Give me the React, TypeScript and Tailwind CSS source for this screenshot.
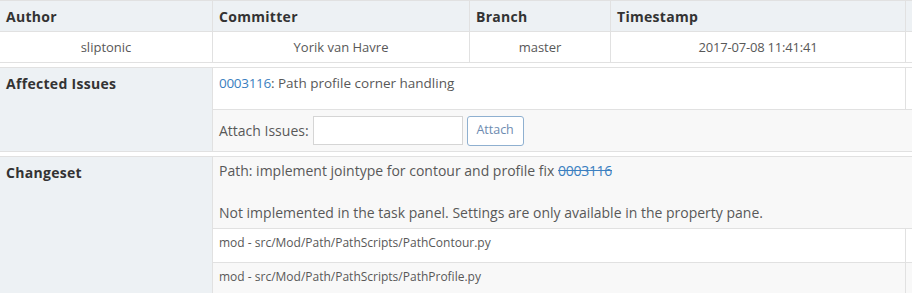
export default function App() {
  const font = { fontFamily: '"Open Sans", "Noto Sans", sans-serif' };
  return (
    <div className="w-[912px] h-[293px] overflow-hidden bg-white text-[13px] text-[#585858]" style={font}>
      {/* Table 1 */}
      <div className="w-[1000px] border-t border-b border-[#e1e1e1]">
        <div className="flex h-[31px] bg-[#edf1f4] border-b border-[#e1e1e1] font-bold text-[14px] tracking-[0.3px] text-[#333] items-center">
          <div className="w-[213px] h-full flex items-center px-[6px] border-r border-[#e1e1e1]">Author</div>
          <div className="w-[257px] h-full flex items-center px-[6px] border-r border-[#e1e1e1]">Committer</div>
          <div className="w-[141px] h-full flex items-center px-[6px] border-r border-[#e1e1e1]">Branch</div>
          <div className="w-[295px] h-full flex items-center px-[6px] border-r border-[#e1e1e1]">Timestamp</div>
          <div className="flex-1" />
        </div>
        <div className="flex h-[30px] items-center">
          <div className="w-[213px] h-full flex items-center justify-center pt-[2px] border-r border-[#e1e1e1]">sliptonic</div>
          <div className="w-[257px] h-full flex items-center justify-center pt-[2px] border-r border-[#e1e1e1]">Yorik van Havre</div>
          <div className="w-[141px] h-full flex items-center justify-center pt-[2px] border-r border-[#e1e1e1]">master</div>
          <div className="w-[295px] h-full flex items-center justify-center pt-[2px] border-r border-[#e1e1e1] tracking-[-0.2px]">2017-07-08 11:41:41</div>
          <div className="flex-1" />
        </div>
      </div>

      {/* Table 2 */}
      <div className="mt-[4px] w-[1000px] flex border-t border-b border-[#e1e1e1]">
        <div className="w-[213px] bg-[#edf1f4] border-r border-[#e1e1e1] px-[6px] pt-[5px] font-bold text-[14px] tracking-[0.3px] text-[#333]">Affected Issues</div>
        <div className="flex-1 flex flex-col">
          <div className="flex h-[42px] border-b border-[#e1e1e1]">
            <div className="w-[693px] border-r border-[#e1e1e1] px-[6px] pt-[5px] text-[13.5px]">
              <a className="text-[#3b7fc0] tracking-[-0.3px]">0003116</a>: Path profile corner handling
            </div>
            <div className="flex-1" />
          </div>
          <div className="h-[41px] bg-[#f8f8f8] flex items-center px-[6px] gap-[4px]">
            <span className="text-[14px]">Attach Issues:</span>
            <input className="w-[150px] h-[29px] border border-[#d5d5d5] bg-white outline-none" />
            <button className="h-[30px] w-[57px] rounded-[3px] border border-[#8fb0d0] bg-white text-[12.5px] text-[#6d8bb0]">Attach</button>
          </div>
        </div>
      </div>

      {/* Table 3 */}
      <div className="mt-[4px] w-[1000px] flex border-t border-[#e1e1e1]">
        <div className="w-[213px] bg-[#edf1f4] border-r border-[#e1e1e1] px-[6px] pt-[5px] font-bold text-[14px] tracking-[0.3px] text-[#333]">Changeset</div>
        <div className="flex-1 flex flex-col">
          <div className="bg-[#f8f8f8] px-[6px] pt-[3px] pb-[5px] leading-[21px] text-[14px] border-b border-[#e1e1e1]">
            <div>
              Path: implement jointype for contour and profile fix{" "}
              <a className="text-[#3b7fc0] line-through tracking-[-0.3px]">0003116</a>
            </div>
            <div className="h-[21px]" />
            <div>Not implemented in the task panel. Settings are only available in the property pane.</div>
          </div>
          <div className="flex h-[34px] border-b border-[#e1e1e1] bg-white">
            <div className="w-[693px] border-r border-[#e1e1e1] px-[6px] pt-[5px] text-[12px]">mod - src/Mod/Path/PathScripts/PathContour.py</div>
            <div className="flex-1" />
          </div>
          <div className="flex h-[34px] bg-[#f8f8f8]">
            <div className="w-[693px] border-r border-[#e1e1e1] px-[6px] pt-[5px] text-[12px]">mod - src/Mod/Path/PathScripts/PathProfile.py</div>
            <div className="flex-1" />
          </div>
        </div>
      </div>
    </div>
  );
}
